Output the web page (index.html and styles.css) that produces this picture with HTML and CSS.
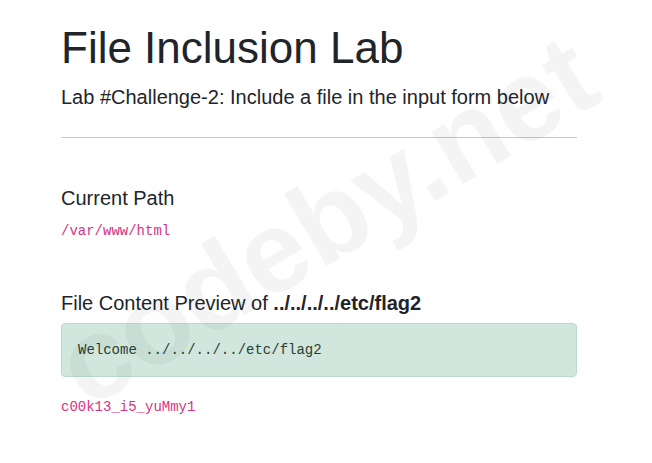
FILE: index.html
```html
<!DOCTYPE html>
<html lang="en">
<head>
<meta charset="utf-8">
<title>File Inclusion Lab</title>
<link rel="stylesheet" href="styles.css">
</head>
<body>
<div class="container">
  <h1 class="title">File Inclusion Lab</h1>
  <p class="lead">Lab #Challenge-2: Include a file in the input form below</p>
  <hr class="divider">
  <h3 class="section-title">Current Path</h3>
  <code class="path">/var/www/html</code>
  <h3 class="section-title preview-title">File Content Preview of <b>../../../../etc/flag2</b></h3>
  <div class="alert-success"><pre class="content">Welcome ../../../../etc/flag2</pre></div>
  <code class="path flag">c00k13_i5_yuMmy1</code>
</div>
<div class="watermark">codeby.net</div>
</body>
</html>
```
FILE: styles.css
```css
html, body {
  margin: 0;
  padding: 0;
  background: #fff;
}
body {
  font-family: "Liberation Sans", Arial, sans-serif;
  color: #212529;
  position: relative;
  min-height: 463px;
  overflow: hidden;
}
.container {
  margin-left: 61px;
  width: 516px;
  display: flex;
  flex-direction: column;
  padding-top: 22px;
}
.title {
  font-size: 44px;
  font-weight: 400;
  line-height: 1.2;
  margin: 0;
}
.lead {
  font-size: 20px;
  line-height: 30px;
  margin: 7px 0 0;
}
.divider {
  margin: 25px 0 0;
  border: 0;
  border-top: 1px solid #c8c9ca;
  height: 0;
}
.section-title {
  font-size: 20px;
  font-weight: 400;
  line-height: 24px;
  margin: 48px 0 0;
}
.section-title b {
  font-weight: 700;
}
.preview-title {
  margin-top: 49px;
}
.path {
  display: block;
  font-family: "Liberation Mono", "Courier New", monospace;
  font-size: 14px;
  line-height: 21px;
  color: #d63384;
  margin-top: 11px;
}
.flag {
  margin-top: 20px;
}
.alert-success {
  margin-top: 8px;
  background: #d1e7dd;
  border: 1px solid #badbcc;
  border-radius: 4px;
  padding: 16px;
  color: #0f5132;
}
.content {
  margin: 0;
  font-family: "Liberation Mono", "Courier New", monospace;
  font-size: 14px;
  line-height: 20px;
  color: #2b3d36;
}
.watermark {
  position: absolute;
  left: 326px;
  top: 220px;
  transform: translate(-50%, -50%) rotate(-31deg);
  font-family: "Liberation Sans", Arial, sans-serif;
  font-weight: 700;
  font-size: 116px;
  line-height: 1;
  white-space: nowrap;
  color: rgba(0, 0, 0, 0.042);
  pointer-events: none;
}
```
